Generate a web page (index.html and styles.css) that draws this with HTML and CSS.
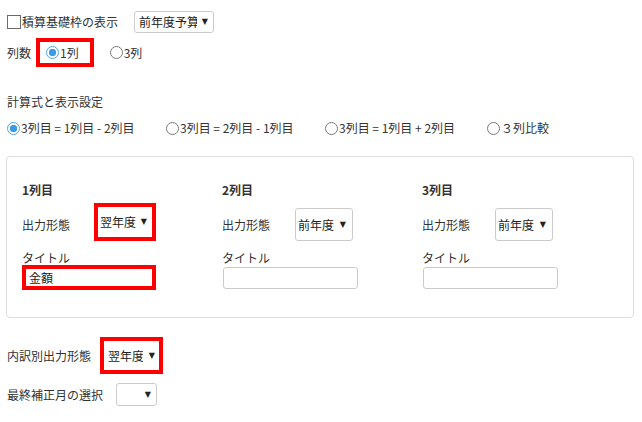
FILE: index.html
```html
<!DOCTYPE html>
<html lang="ja">
<head>
<meta charset="utf-8">
<title>設定</title>
<link rel="stylesheet" href="styles.css">
</head>
<body>
<div class="page">
  <div class="row row-top">
    <label class="check"><input type="checkbox" class="cb">積算基礎枠の表示</label>
    <span class="sel sel-top"><select><option>前年度予算</option></select></span>
  </div>

  <div class="row row-cols">
    <span class="lbl">列数</span>
    <label class="radio hl-radio"><input type="radio" name="cols" checked>1列</label>
    <label class="radio radio-3"><input type="radio" name="cols">3列</label>
  </div>

  <div class="section-title">計算式と表示設定</div>

  <div class="row radio-row">
    <label class="radio opt opt-wide"><input type="radio" name="formula" checked>3列目 = 1列目 - 2列目</label>
    <label class="radio opt opt-wide"><input type="radio" name="formula">3列目 = 2列目 - 1列目</label>
    <label class="radio opt opt-wider"><input type="radio" name="formula">3列目 = 1列目 + 2列目</label>
    <label class="radio opt"><input type="radio" name="formula">３列比較</label>
  </div>

  <div class="panel">
    <div class="col">
      <div class="col-head">1列目</div>
      <div class="out-row">
        <span class="out-lbl">出力形態</span>
        <span class="sel sel-panel sel-hl"><select><option>翌年度</option></select></span>
      </div>
      <div class="title-lbl">タイトル</div>
      <input class="txt txt-hl" type="text" value="金額">
    </div>
    <div class="col">
      <div class="col-head">2列目</div>
      <div class="out-row">
        <span class="out-lbl">出力形態</span>
        <span class="sel sel-panel"><select><option>前年度</option></select></span>
      </div>
      <div class="title-lbl">タイトル</div>
      <input class="txt" type="text" value="">
    </div>
    <div class="col">
      <div class="col-head">3列目</div>
      <div class="out-row">
        <span class="out-lbl">出力形態</span>
        <span class="sel sel-panel"><select><option>前年度</option></select></span>
      </div>
      <div class="title-lbl">タイトル</div>
      <input class="txt" type="text" value="">
    </div>
  </div>

  <div class="row row-breakdown">
    <span class="lbl">内訳別出力形態</span>
    <span class="sel sel-breakdown"><select><option>翌年度</option></select></span>
  </div>

  <div class="row row-month">
    <span class="lbl">最終補正月の選択</span>
    <span class="sel sel-month"><select><option></option></select></span>
  </div>
</div>
</body>
</html>
```

FILE: styles.css
```css
* { box-sizing: border-box; }

body {
  margin: 0;
  background: #fff;
  color: #333;
  font-family: "Noto Sans CJK JP", "Noto Sans", sans-serif;
  font-size: 12px;
  line-height: 16px;
}

.page {
  padding: 11px 8px 0 7px;
}

.row {
  display: flex;
  align-items: center;
}

/* checkbox */
.check {
  display: flex;
  align-items: center;
}

.cb {
  appearance: none;
  -webkit-appearance: none;
  width: 14px;
  height: 14px;
  margin: 0 1px 0 0;
  border: 1px solid #6b6b6b;
  background: #fff;
}

/* radios */
.radio {
  display: flex;
  align-items: center;
}

.radio input {
  appearance: none;
  -webkit-appearance: none;
  width: 13px;
  height: 13px;
  margin: 0 1px 0 0;
  border: 1px solid #7a7a7a;
  border-radius: 50%;
  background: #fff;
}

.radio input:checked {
  border-color: #4ea6e6;
  background: radial-gradient(circle, #3c9be8 0 3.4px, #fff 4px);
}

/* selects */
.sel {
  position: relative;
  display: inline-flex;
}

.sel select {
  appearance: none;
  -webkit-appearance: none;
  margin: 0;
  height: 22px;
  padding: 0 16px 0 4px;
  border: 1px solid #cccccc;
  border-radius: 3px;
  background: #fff;
  color: #222;
  font: inherit;
}

.sel::after {
  content: "\25BC";
  position: absolute;
  right: 6px;
  top: 50%;
  transform: translateY(-50%);
  font-family: "DejaVu Sans", sans-serif;
  font-size: 8px;
  line-height: 8px;
  color: #222;
  pointer-events: none;
}

.row-top { height: 22px; }

.sel-top { margin-left: 16px; }
.sel-top select { width: 80px; }

/* column count */
.row-cols {
  margin-top: 5px;
  height: 29px;
}

.row-cols .lbl { margin-right: 5px; }

.hl-radio {
  height: 29px;
  padding: 0 11px 0 6px;
  border: 4px solid #ff0000;
}

.radio-3 { margin-left: 16px; }

.section-title {
  margin-top: 27px;
}

.radio-row {
  margin-top: 10px;
  height: 16px;
}

.opt { white-space: nowrap; }
.opt-wide { width: 159px; }
.opt-wider { width: 162px; }

/* panel */
.panel {
  margin: 20px 0 0 -1px;
  padding: 25px 0 27px 15px;
  border: 1px solid #dddddd;
  border-radius: 4px;
  display: grid;
  grid-template-columns: 200px 200px 200px;
  align-items: start;
}

.col-head {
  font-weight: bold;
  color: #333;
}

.out-row {
  display: flex;
  align-items: center;
  height: 33px;
  margin-top: 10px;
}

.out-lbl { width: 73px; }

.sel-panel select {
  width: 58px;
  height: 33px;
  padding-left: 2px;
}

.sel-panel::after { right: 7px; }

.sel-hl {
  align-self: flex-end;
  margin-left: -1px;
}

.sel-hl select {
  width: 62px;
  height: 38px;
  border: 4px solid #ff0000;
  border-radius: 0;
  padding-left: 2px;
}

.sel-hl::after { right: 9px; }

.title-lbl {
  margin-top: 9px;
}

.txt {
  display: block;
  margin: 1px 0 0 1px;
  width: 135px;
  height: 22px;
  padding: 0 4px;
  border: 1px solid #cccccc;
  border-radius: 3px;
  background: #fff;
  color: #222;
  font: inherit;
}

.txt-hl {
  margin: -1px 0 0 0;
  width: 134px;
  height: 25px;
  padding: 0 3px;
  border: 4px solid #ff0000;
  border-radius: 0;
}

/* lower rows */
.row-breakdown {
  margin-top: 19px;
  height: 37px;
}

.sel-breakdown { margin-left: 9px; }

.sel-breakdown select {
  width: 63px;
  height: 37px;
  border: 4px solid #ff0000;
  border-radius: 0;
  padding-left: 4px;
}

.sel-breakdown::after { right: 8px; }

.row-month {
  margin-top: 9px;
  height: 23px;
}

.sel-month { margin-left: 13px; }

.sel-month select {
  width: 41px;
  height: 23px;
}
```
